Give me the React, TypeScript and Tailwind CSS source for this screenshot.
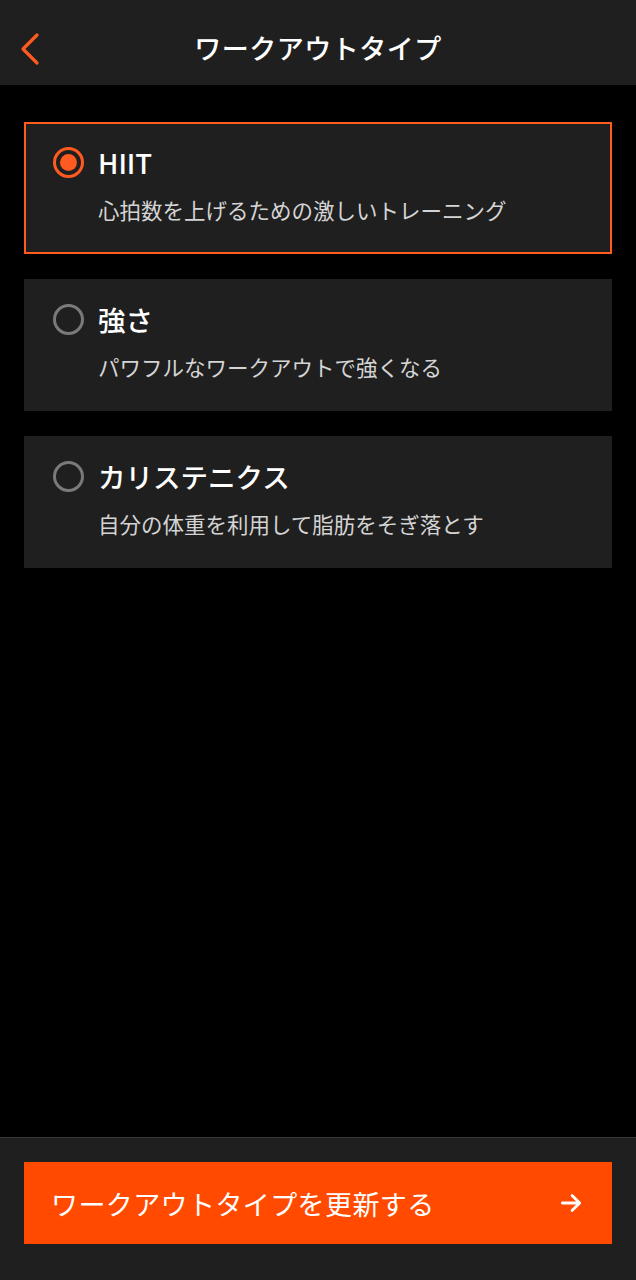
import * as React from "react";

const OPTIONS = [
  { key: "hiit", title: "HIIT", desc: "心拍数を上げるための激しいトレーニング" },
  { key: "strength", title: "強さ", desc: "パワフルなワークアウトで強くなる" },
  { key: "cali", title: "カリステニクス", desc: "自分の体重を利用して脂肪をそぎ落とす" },
];

function Radio({ active }: { active: boolean }) {
  return (
    <span
      className={[
        "flex h-[31px] w-[31px] shrink-0 items-center justify-center rounded-full border-[3px]",
        active ? "border-[#ff5a1f]" : "border-[#7a7a7a]",
      ].join(" ")}
    >
      {active && <span className="h-[17px] w-[17px] rounded-full bg-[#ff5a1f]" />}
    </span>
  );
}

export default function App() {
  const [selected, setSelected] = React.useState("hiit");
  return (
    <div
      className="flex h-[1280px] w-full flex-col bg-black text-white"
      style={{ fontFamily: '"Noto Sans CJK JP", "Noto Sans", sans-serif' }}
    >
      {/* ヘッダー */}
      <header className="relative flex h-[85px] shrink-0 items-center justify-center bg-[#1f1f1f] pt-[10px]">
        <button type="button" className="absolute left-[18px] top-[31px]">
          <svg viewBox="0 0 24 36" className="h-[36px] w-[24px]" fill="none" stroke="#ff5a1f" strokeWidth="3.2" strokeLinecap="round" strokeLinejoin="round">
            <path d="M19 4 5 18l14 14" />
          </svg>
        </button>
        <h1 className="text-[27px] font-medium leading-none tracking-[0.5px]">ワークアウトタイプ</h1>
      </header>

      <main className="flex flex-1 flex-col gap-[25px] px-[24px] pt-[37px]">
        {OPTIONS.map((o) => {
          const active = selected === o.key;
          return (
            <button
              key={o.key}
              type="button"
              onClick={() => setSelected(o.key)}
              className={[
                "flex h-[132px] flex-col bg-[#1f1f1f] pl-[27px] pt-[22px] text-left",
                active ? "border-2 border-[#ff5a1f]" : "border-2 border-[#1f1f1f]",
              ].join(" ")}
            >
              <div className="flex items-center gap-[14px]">
                <Radio active={active} />
                <span className="text-[27.5px] font-medium leading-[32px]">{o.title}</span>
              </div>
              <p className="mt-[21px] pl-[45px] text-[21.5px] leading-none text-[#d4d4d4]">{o.desc}</p>
            </button>
          );
        })}
      </main>

      {/* フッター */}
      <footer className="flex h-[143px] shrink-0 flex-col border-t border-[#3a3a3a] bg-[#1f1f1f] px-[24px] pt-[24px]">
        <button type="button" className="flex h-[82px] items-center justify-between bg-[#ff4a00] pl-[27px] pr-[28px]">
          <span className="text-[27px] leading-none tracking-[0.4px] text-white">ワークアウトタイプを更新する</span>
          <svg viewBox="0 0 24 24" className="h-[26px] w-[26px]" fill="none" stroke="white" strokeWidth="2.6" strokeLinecap="round" strokeLinejoin="round">
            <path d="M4 12h15M13 5l7 7-7 7" />
          </svg>
        </button>
      </footer>
    </div>
  );
}
